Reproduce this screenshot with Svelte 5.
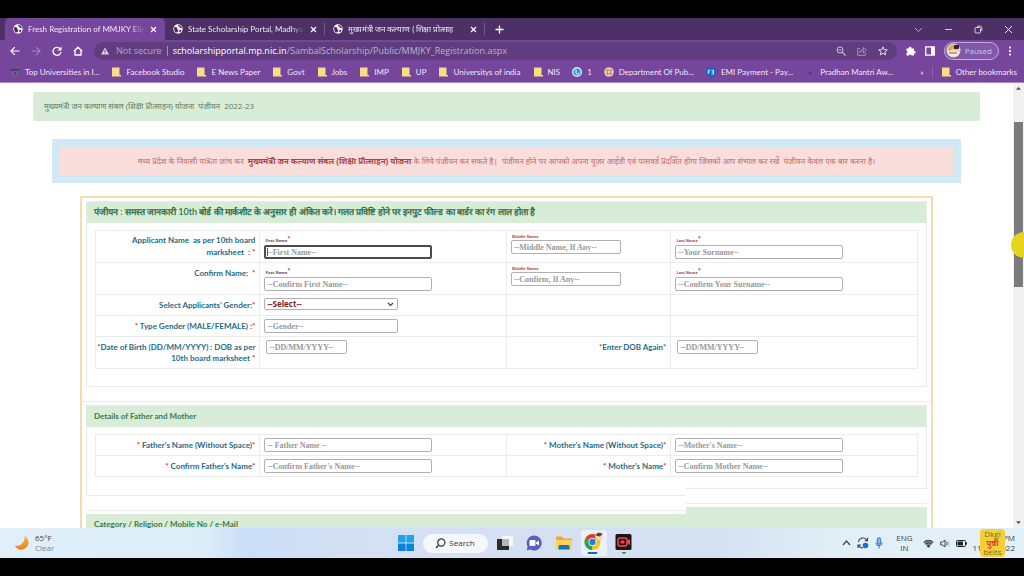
<script>
  const tabs = [
    { title: 'Fresh Registration of MMJKY Elig', active: true },
    { title: 'State Scholarship Portal, Madhya', active: false },
    { title: 'मुख्यमंत्री जन कल्याण ( शिक्षा प्रोत्साह', active: false }
  ];

  const bookmarks = [
    { icon: 'college', label: 'Top Universities in I...' },
    { icon: 'folder', label: 'Facebook Studio' },
    { icon: 'folder', label: 'E News Paper' },
    { icon: 'folder', label: 'Govt' },
    { icon: 'folder', label: 'Jobs' },
    { icon: 'folder', label: 'IMP' },
    { icon: 'folder', label: 'UP' },
    { icon: 'folder', label: 'Universitys of india' },
    { icon: 'folder', label: 'NIS' },
    { icon: 'swirl', label: '1' },
    { icon: 'seal', label: 'Department Of Pub...' },
    { icon: 'emi', label: 'EMI Payment - Pay...' },
    { icon: 'dots', label: 'Pradhan Mantri Aw...' }
  ];
</script>

{#snippet globe()}
  <svg class="globe" viewBox="0 0 16 16" aria-hidden="true">
    <circle cx="8" cy="8" r="7.5" fill="#fff" />
    <path d="M2 5c3-.5 5 .5 5 2.500s2 1.500 1.500 3.500-3 1.500-3 3C3 13 1 10 2 5zM8 1.500c3-.5 6 2 6.200 5-1.700.8-3-.2-3.400-1.500C10.400 3.800 8 4 8 1.500zM10.500 9.500c1.500-.6 3 0 3 .8-.6 1.600-2 2.700-3 3-.8-1-.9-3 0-3.800z" fill="#4d3065" />
  </svg>
{/snippet}

{#snippet folder()}
  <svg class="mark" viewBox="0 0 10 10" aria-hidden="true">
    <path d="M1 .5h7.500V8H10v1.500H1z" fill="#fddc86" />
  </svg>
{/snippet}

<div class="screen">
  <header class="browser">
    <div class="tabstrip">
      {#each tabs as tab}
        <div class="tab" class:active={tab.active}>
          {@render globe()}
          <span class="title">{tab.title}</span>
          <button class="bare" aria-label="Close tab">
            <svg width="7" height="7" viewBox="0 0 7 7"><path d="M1 1l5 5M6 1L1 6" stroke="#fff" stroke-width="1.200" /></svg>
          </button>
        </div>
      {/each}
      <button class="bare plus" aria-label="New tab">
        <svg width="9" height="9" viewBox="0 0 9 9"><path d="M4.500 .5v8M.5 4.500h8" stroke="#fff" stroke-width="1.300" /></svg>
      </button>
      <div class="window">
        <button class="bare" aria-label="Search tabs"><svg width="9" height="9" viewBox="0 0 9 9"><path d="M1 3l3.500 3.500L8 3" fill="none" stroke="#b7a6c6" /></svg></button>
        <button class="bare" aria-label="Minimize"><svg width="9" height="9" viewBox="0 0 9 9"><path d="M1 4.500h7" stroke="#d6cbe0" /></svg></button>
        <button class="bare" aria-label="Restore"><svg width="9" height="9" viewBox="0 0 9 9"><rect x="1" y="2.500" width="5.500" height="5.500" rx="1" fill="none" stroke="#d6cbe0" /><path d="M3 1.200h3.500a1.300 1.300 0 0 1 1.300 1.300V6" fill="none" stroke="#d6cbe0" /></svg></button>
        <button class="bare" aria-label="Close"><svg width="9" height="9" viewBox="0 0 9 9"><path d="M1 1l7 7M8 1L1 8" stroke="#e6dfed" /></svg></button>
      </div>
    </div>

    <div class="toolbar">
      <nav class="moves" aria-label="Navigation">
        <button class="bare" aria-label="Back"><svg width="10" height="10" viewBox="0 0 10 10"><path d="M9.500 5H1M4.800 1.200L1 5l3.800 3.800" fill="none" stroke="#fff" stroke-width="1.200" /></svg></button>
        <button class="bare" aria-label="Forward"><svg width="10" height="10" viewBox="0 0 10 10"><path d="M.5 5H9M5.200 1.200L9 5 5.200 8.800" fill="none" stroke="#a583c8" stroke-width="1.200" /></svg></button>
        <button class="bare" aria-label="Reload"><svg width="10" height="10" viewBox="0 0 10 10"><path d="M8.200 2.800A4 4 0 1 0 9 6" fill="none" stroke="#fff" stroke-width="1.300" /><path d="M9.500 .5v4h-4z" fill="#fff" /></svg></button>
        <button class="bare" aria-label="Home"><svg width="10" height="10" viewBox="0 0 10 10"><path d="M.8 5.200L5 1.200l4.200 4M2 4.500V9h6V4.500" fill="none" stroke="#fff" stroke-width="1.300" /></svg></button>
      </nav>
      <div class="address">
        <svg width="8" height="8" viewBox="0 0 8 8" aria-hidden="true"><path d="M4 .5L8 7.500H0z" fill="#d9cfe3" /><path d="M4 3v2M4 5.700v1" stroke="#5f3d7e" /></svg>
        <span class="unsafe">Not secure</span>
        <span class="bar"></span>
        <span class="url"><b>scholarshipportal.mp.nic.in</b>/SambalScholarship/Public/MMJKY_Registration.aspx</span>
        <button class="bare" aria-label="Zoom"><svg width="10" height="10" viewBox="0 0 10 10"><circle cx="4" cy="4" r="3" fill="none" stroke="#cdbfdb" /><path d="M6.200 6.200L9.500 9.500M2.500 4h3" stroke="#cdbfdb" stroke-width="1.200" /></svg></button>
        <button class="bare" aria-label="Share"><svg width="10" height="10" viewBox="0 0 10 10"><path d="M3 2.500H.7v6.800h7.600V7M2.600 6.500C3 4.500 4.500 3.500 6.500 3.500V1.300L9.500 4.300l-3 2.700V5C4.800 5 3.500 5.500 2.600 6.500z" fill="none" stroke="#ab95bf" stroke-width=".9" /></svg></button>
        <button class="bare" aria-label="Bookmark"><svg width="10" height="10" viewBox="0 0 10 10"><path d="M5 .8l1.200 2.900 3.100.2-2.400 2 .8 3L5 7.300 2.300 8.900l.8-3-2.400-2 3.100-.2z" fill="none" stroke="#e4dcec" /></svg></button>
      </div>
      <button class="bare" aria-label="Extensions"><svg width="10" height="10" viewBox="0 0 10 10"><path d="M.5 2.500h2.300a1.400 1.400 0 1 1 2.700 0H8V5a1.300 1.300 0 1 1 0 2.500v2H5.600a1.300 1.300 0 0 0-2.500 0H.5V7.200a1.300 1.300 0 0 0 0-2.500z" fill="#fff" /></svg></button>
      <button class="bare" aria-label="Side panel"><svg width="10" height="10" viewBox="0 0 10 10"><rect x=".7" y=".9" width="8.600" height="8.200" fill="none" stroke="#fff" stroke-width="1.300" /><path d="M6 1h3v8H6z" fill="#fff" /></svg></button>
      <button class="profile">
        <svg width="15" height="15" viewBox="0 0 15 15" aria-hidden="true"><circle cx="7.500" cy="7.500" r="7" fill="#e9d9c8" /><path d="M2 6c2-5 8-6 11-1l-2 2-4-1-4 2z" fill="#d9a640" /><rect x="8" y="2" width="5" height="4" rx="1" fill="#2b2733" /><path d="M1 9h12l-2 4H4z" fill="#f6eee6" /><path d="M3 10h8" stroke="#a04a3a" /></svg>
        Paused
      </button>
      <button class="bare" aria-label="Menu"><svg width="4" height="10" viewBox="0 0 4 10"><path d="M1 .5h2v2H1zM1 4h2v2H1zM1 7.500h2v2H1z" fill="#e9e1f1" /></svg></button>
    </div>

    <nav class="bookmarks" aria-label="Bookmarks">
      {#each bookmarks as b}
        <a href="#top">
          {#if b.icon === 'folder'}
            {@render folder()}
          {:else if b.icon === 'college'}
            <svg class="mark" viewBox="0 0 10 10" aria-hidden="true"><path d="M0 2h10L8.500 4h-7z" fill="#4c3b63" /><path d="M2 4h6l-1 5H3z" fill="#4e7d77" /><path d="M4 5h2v3H4z" fill="#5b3f86" /></svg>
          {:else if b.icon === 'swirl'}
            <svg class="mark" viewBox="0 0 10 10" aria-hidden="true"><circle cx="5" cy="5" r="5" fill="#d8ecf8" /><circle cx="5" cy="5" r="3.600" fill="#3f8fd0" /><path d="M4 2.500v3.200a1.500 1.500 0 0 0 3 0" fill="none" stroke="#e9f6ff" /></svg>
          {:else if b.icon === 'seal'}
            <svg class="mark" viewBox="0 0 10 10" aria-hidden="true"><circle cx="5" cy="5" r="4.800" fill="#e8c9b0" /><circle cx="5" cy="5" r="3" fill="#c2795a" /><path d="M1 5h8M5 2v6" stroke="#f2dccb" /></svg>
          {:else if b.icon === 'emi'}
            <svg class="mark" viewBox="0 0 10 10" aria-hidden="true"><circle cx="5" cy="5" r="5" fill="#0f6bc4" /><path d="M2.300 7V3.200h2M2.300 5h1.500M5.500 3.200h2V7h-2M5.800 5h1.500" fill="none" stroke="#fff" stroke-width=".8" /></svg>
          {:else}
            <svg class="mark" viewBox="0 0 10 10" aria-hidden="true"><circle cx="5" cy="2.500" r="1" fill="#8a4f6e" /><path d="M3 5l2-1 2 2-2 2z" fill="#4b3c94" /></svg>
          {/if}
          <span>{b.label}</span>
        </a>
      {/each}
      <button class="bare more" aria-label="More bookmarks">»</button>
      <a class="other" href="#top">{@render folder()}<span>Other bookmarks</span></a>
    </nav>
  </header>

  <div class="viewport">
    <main>
      <div class="notice">मुख्यमंत्री जन कल्याण संबल (शिक्षा प्रोत्साहन) योजना&nbsp; पंजीयन&nbsp; 2022-23</div>

      <div class="info">
        <p class="warn">मध्य प्रदेश के निवासी पात्रता जांच कर&nbsp; <b>मुख्यमंत्री जन कल्याण संबल (शिक्षा प्रोत्साहन) योजना</b> के लिये पंजीयन कर सकते है|&nbsp; पंजीयन होने पर आपको अपना यूजर आईडी एवं पासवर्ड प्रदर्शित होगा जिसको आप संभाल कर रखें&nbsp; पंजीयन केवल एक बार करना है।</p>
      </div>

      <form class="sheet">
        <section class="panel">
          <h2 class="hindi">पंजीयन : समस्त जानकारी 10th बोर्ड की मार्कशीट के अनुसार ही अंकित करे। गलत प्रविष्टि होने पर इनपुट फील्ड का बार्डर का रंग लाल होता है</h2>
          <div class="body">
            <table>
              <colgroup><col class="name" /><col class="value" /><col class="name" /><col class="value" /></colgroup>
              <tbody>
                <tr class="tall">
                  <td class="ask loose">Applicant Name&nbsp; as per 10th board<br />marksheet&nbsp; : <i>*</i></td>
                  <td><label class="tiny dark" for="first">First Name<i>*</i></label><input id="first" class="wide focused" placeholder="--First Name--" /></td>
                  <td><label class="tiny plain" for="middle">Middle Name</label><input id="middle" class="short" placeholder="--Middle Name, If Any--" /></td>
                  <td><label class="tiny" for="last">Last Name<i>*</i></label><input id="last" class="wide" placeholder="--Your Surname--" /></td>
                </tr>
                <tr class="tall">
                  <td class="ask">Confirm Name: &nbsp;<i>*</i></td>
                  <td><label class="tiny dark" for="first2">First Name<i>*</i></label><input id="first2" class="wide" placeholder="--Confirm First Name--" /></td>
                  <td><label class="tiny plain" for="middle2">Middle Name</label><input id="middle2" class="short" placeholder="--Confirm, If Any--" /></td>
                  <td><label class="tiny" for="last2">Last Name<i>*</i></label><input id="last2" class="wide" placeholder="--Confirm Your Surname--" /></td>
                </tr>
                <tr class="low">
                  <td class="ask"><label for="gender">Select Applicants’ Gender:<i>*</i></label></td>
                  <td><select id="gender" class="mid"><option>--Select--</option></select></td>
                  <td></td>
                  <td></td>
                </tr>
                <tr class="low">
                  <td class="ask"><label for="gender2"><i>*</i> Type Gender (MALE/FEMALE) :<i>*</i></label></td>
                  <td><input id="gender2" class="mid" placeholder="--Gender--" /></td>
                  <td></td>
                  <td></td>
                </tr>
                <tr class="tall">
                  <td class="ask"><label for="dob"><i>*</i>Date of Birth (DD/MM/YYYY) : DOB as per<br />10th board marksheet <i>*</i></label></td>
                  <td class="date"><input id="dob" placeholder="--DD/MM/YYYY--" /></td>
                  <td class="ask"><label for="dob2"><i>*</i>Enter DOB Again<i>*</i></label></td>
                  <td class="date"><input id="dob2" placeholder="--DD/MM/YYYY--" /></td>
                </tr>
              </tbody>
            </table>
          </div>
        </section>

        <section class="panel open">
          <h2>Details of Father and Mother</h2>
          <div class="body">
            <table>
              <colgroup><col class="name" /><col class="value" /><col class="name" /><col class="value" /></colgroup>
              <tbody>
                <tr class="low">
                  <td class="ask"><label for="father"><i>*</i> Father's Name (Without Space)<i>*</i></label></td>
                  <td><input id="father" class="wide" placeholder="-- Father Name --" /></td>
                  <td class="ask"><label for="mother"><i>*</i> Mother's Name (Without Space)<i>*</i></label></td>
                  <td><input id="mother" class="wide" placeholder="--Mother's Name--" /></td>
                </tr>
                <tr class="low">
                  <td class="ask"><label for="father2"><i>*</i> Confirm Father's Name<i>*</i></label></td>
                  <td><input id="father2" class="wide" placeholder="--Confirm Father's Name--" /></td>
                  <td class="ask"><label for="mother2"><i>*</i> Mother's Name<i>*</i></label></td>
                  <td><input id="mother2" class="wide" placeholder="--Confirm Mother Name--" /></td>
                </tr>
              </tbody>
            </table>
          </div>
        </section>

        <div class="split">
          <div class="lower">
            <div class="foot"></div>
            <h2>Category / Religion / Mobile No / e-Mail</h2>
          </div>
          <div class="upper">
            <div class="foot"></div>
            <div class="band"></div>
          </div>
        </div>
      </form>
    </main>

    <div class="scroll" aria-hidden="true">
      <svg viewBox="0 0 7 5"><path d="M0 5l3.500-4L7 5z" fill="#505050" /></svg>
      <span class="gap"></span>
      <span class="thumb"></span>
      <span class="rest"></span>
      <svg viewBox="0 0 7 5"><path d="M0 0l3.500 4L7 0z" fill="#505050" /></svg>
    </div>
    <span class="pointer"></span>
  </div>

  <footer class="taskbar">
    <div class="weather">
      <svg width="16" height="16" viewBox="0 0 16 16" aria-hidden="true"><defs><linearGradient id="moon" x1="0" y1="0" x2="0" y2="1"><stop offset="0" stop-color="#fbb13c" /><stop offset="1" stop-color="#f0821e" /></linearGradient></defs><path d="M10.500 1A7.200 7.200 0 1 1 .8 10.500C6 12 11.500 7 10.500 1z" fill="url(#moon)" /></svg>
      <div><div class="deg">65°F</div><div class="sky">Clear</div></div>
    </div>

    <div class="apps">
      <button class="bare" aria-label="Start"><svg width="16" height="16" viewBox="0 0 16 16"><path d="M0 0h7.600v7.600H0zM8.400 0H16v7.600H8.400z" fill="#1ba4ea" /><path d="M0 8.400h7.600V16H0zM8.400 8.400H16V16H8.400z" fill="#0a84d6" /></svg></button>
      <button class="search"><svg width="11" height="11" viewBox="0 0 11 11" aria-hidden="true"><circle cx="6.300" cy="4.500" r="3.600" fill="none" stroke="#333" stroke-width="1.200" /><path d="M3.700 7L1 10" stroke="#333" stroke-width="1.300" /></svg>Search</button>
      <button class="bare" aria-label="Task view"><svg width="16" height="16" viewBox="0 0 16 16"><rect x="5" y="1" width="11" height="10" fill="#f6f6f6" /><rect x="0" y="4" width="12" height="11" fill="#2b2b2b" /><rect x="5" y="4" width="7" height="7" fill="#b5b5b5" /></svg></button>
      <button class="bare" aria-label="Chat"><svg width="16" height="16" viewBox="0 0 16 16"><path d="M8 .5a7.500 7.500 0 1 1-3.500 14L.8 15.500l.7-4A7.500 7.500 0 0 1 8 .5z" fill="#5a5fc0" /><rect x="3.500" y="5" width="6" height="6" rx="1.300" fill="#fff" /><path d="M10 7.500l3-2v5l-3-2z" fill="#fff" /></svg></button>
      <button class="bare" aria-label="Files"><svg width="18" height="16" viewBox="0 0 18 16"><path d="M1 2.500A1 1 0 0 1 2 1.500h4.500l2 2H16a1 1 0 0 1 1 1V14H1z" fill="#f0a72c" /><path d="M1 5h16v8.500a1 1 0 0 1-1 1H2a1 1 0 0 1-1-1z" fill="#fdd05a" /><path d="M3.500 14.500v-3a1.500 1.500 0 0 1 1.500-1.500h8a1.500 1.500 0 0 1 1.500 1.500v3z" fill="#1473b4" /></svg></button>
      <button class="bare chrome" aria-label="Chrome">
        <svg width="22" height="24" viewBox="0 0 22 24"><circle cx="9.500" cy="11" r="8" fill="#f9c31f" /><path d="M9.500 11L2.600 7A8 8 0 0 1 16.500 7z" fill="#e33b2e" /><path d="M9.500 11L9 19A8 8 0 0 1 2.600 7z" fill="#2da14c" /><circle cx="9.500" cy="11" r="4" fill="#fff" /><circle cx="9.500" cy="11" r="3.200" fill="#2c78e6" /><circle cx="16" cy="5" r="4" fill="#ead9c8" /><path d="M12.500 4.500c1-3 5-4 7-1l-3 2z" fill="#5d4238" /><rect x="4.500" y="21" width="10" height="2" rx="1" fill="#1667b0" /></svg>
      </button>
      <button class="bare" aria-label="Recorder"><svg width="17" height="22" viewBox="0 0 17 22"><rect x=".5" y="2" width="16" height="16" rx="1.500" fill="#1f1517" /><rect x="3" y="6" width="9" height="8" rx="2" fill="none" stroke="#ef4a50" stroke-width="1.500" /><rect x="5.500" y="8.500" width="4" height="3" rx="1" fill="#ef4a50" /><path d="M12 9l3-2v6l-3-2z" fill="#ef4a50" /><rect x="7" y="20" width="4" height="1.500" rx=".7" fill="#666" /></svg></button>
    </div>

    <div class="tray">
      <svg width="9" height="6" viewBox="0 0 9 6"><path d="M1 5l3.500-4L8 5" fill="none" stroke="#444" stroke-width="1.200" /></svg>
      <svg width="12" height="12" viewBox="0 0 12 12"><path d="M1.500 5A4.500 4.500 0 0 1 10 3.500M10.500 .8v3H7.800M1 11V8h3M1.500 8.500A4.500 4.500 0 0 0 6 10.800" fill="none" stroke="#37414b" stroke-width="1.100" /><circle cx="8.500" cy="8.500" r="2.800" fill="#0c78d4" /></svg>
      <svg class="mic" width="8" height="12" viewBox="0 0 8 12"><rect x="2.300" y=".8" width="3.400" height="6.500" rx="1.700" fill="#8dbbe3" stroke="#2f74b5" /><path d="M.8 5.500a3.200 3.200 0 0 0 6.400 0M4 9v2.500" fill="none" stroke="#2f74b5" /></svg>
      <div class="lang"><div>ENG</div><div>IN</div></div>
      <svg width="11" height="9" viewBox="0 0 11 9"><path d="M.5 3.200a7.200 7.200 0 0 1 10 0L5.500 8.500z" fill="#7c858c" /><path d="M.7 3.200a7 7 0 0 1 9.600 0M2.300 5a4.700 4.700 0 0 1 6.400 0" fill="none" stroke="#343c43" /><circle cx="5.500" cy="7.300" r="1.200" fill="#343c43" /></svg>
      <svg width="10" height="9" viewBox="0 0 10 9"><path d="M.7 3h1.800L5 1v7L2.500 6H.7z" fill="none" stroke="#3d454c" /><path d="M6.500 2.800a2.500 2.500 0 0 1 0 3.400" fill="none" stroke="#3d454c" /><path d="M8 1.500a4.500 4.500 0 0 1 0 6" fill="none" stroke="#b4bfc7" /></svg>
      <svg width="11" height="7" viewBox="0 0 11 7"><rect x=".5" y=".5" width="9" height="6" rx="1" fill="none" stroke="#222" /><path d="M1.500 1.500H7v4H1.500z" fill="#222" /><path d="M10 2.500h1v2h-1z" fill="#222" /></svg>
      <div class="clock">
        <div>10:01 PM</div>
        <div>11/12/2022</div>
        <div class="badge"><span>Dkgl</span><b>पुन्नी</b><span>belts</span></div>
      </div>
    </div>
  </footer>
</div>

<style>
  :global(body) {
    margin: 0;
    background: #000;
  }
  .screen {
    box-sizing: border-box;
    height: 100vh;
    padding: 18px 0;
    display: flex;
    flex-direction: column;
    overflow: hidden;
    background: #000;
    font-family: 'Open Sans', 'Noto Sans', sans-serif;
    font-size: 8px;
    line-height: 12px;
  }
  .bare {
    display: flex;
    align-items: center;
    justify-content: center;
    padding: 0;
    border: 0;
    background: none;
    color: inherit;
    font: inherit;
  }
  svg { flex: none; }

  .browser { background: #75469c; color: #efe8f6; }
  .tabstrip {
    display: flex;
    align-items: stretch;
    height: 22px;
    padding-left: 5px;
    background: #4d3065;
    font-family: Lato, sans-serif;
  }
  .tab {
    box-sizing: border-box;
    display: flex;
    align-items: center;
    gap: 5px;
    width: 160px;
    padding: 0 8px;
    background: linear-gradient(#73578a, #73578a) right center / 1px 12px no-repeat;
  }
  .tab.active {
    border-radius: 5px 5px 0 0;
    background: #75469c;
  }
  .globe { width: 10px; height: 10px; }
  .title {
    flex: 1;
    min-width: 0;
    overflow: hidden;
    white-space: nowrap;
    mask-image: linear-gradient(90deg, #000 88%, transparent);
  }
  .plus { width: 28px; }
  .window {
    display: flex;
    gap: 21px;
    margin-left: auto;
    padding-right: 11px;
  }
  .toolbar {
    display: flex;
    align-items: center;
    gap: 9px;
    height: 21px;
    padding: 0 12px 0 10px;
  }
  .moves { display: flex; gap: 11px; margin-right: 2px; }
  .address {
    flex: 1;
    display: flex;
    align-items: center;
    gap: 11px;
    height: 18px;
    padding: 0 9px 0 7px;
    border-radius: 9px;
    background: #5f3d7e;
    font-size: 9px;
  }
  .unsafe { color: #b7a5c8; margin-left: -4px; }
  .bar { width: 1px; height: 10px; margin: 0 -6px; background: #a48fb8; }
  .url { flex: 1; color: #bfaed0; white-space: nowrap; }
  .url b { color: #fff; font-weight: 400; }
  .profile {
    display: flex;
    align-items: center;
    gap: 4px;
    height: 18px;
    padding: 0 6px 0 1px;
    border: 1px solid #c5abe0;
    border-radius: 9px;
    background: #8059a8;
    color: #cfc6f5;
    font: inherit;
  }
  .bookmarks {
    display: flex;
    align-items: center;
    gap: 12px;
    height: 21px;
    padding: 0 7px 0 10px;
    border-bottom: 1px solid #a98bc4;
    font-family: Lato, sans-serif;
  }
  .bookmarks a {
    display: flex;
    align-items: center;
    gap: 5px;
    color: #efe8f6;
    text-decoration: none;
    white-space: nowrap;
  }
  .mark { width: 10px; height: 10px; }
  .more { margin-left: auto; }
  .bookmarks .other { padding-left: 8px; margin-left: -4px; border-left: 1px solid #8c63b0; }

  .viewport {
    position: relative;
    flex: 1;
    min-height: 0;
    display: flex;
    overflow: hidden;
    background: #fff;
  }
  main {
    flex: 1;
    min-width: 0;
    padding: 9px 33px 0;
  }
  .notice {
    padding: 8px 11px 9px;
    border-radius: 2px;
    background: #d8ecd7;
    color: #5a8163;
  }
  .info {
    margin: 18px 19px 0;
    padding: 8px;
    background: #d0e9f5;
  }
  .warn {
    margin: 0;
    padding: 8px 0;
    background: #fadedc;
    color: #c0696b;
    text-align: center;
    white-space: nowrap;
  }
  .warn b { color: #a94448; }
  .sheet {
    margin: 13px 47px 0;
    padding: 3px 0 40px;
    border: 2px solid #f4dcb0;
  }
  .panel {
    margin: 0 4px;
    border: 1px solid #e3efe1;
  }
  h2, .band {
    box-sizing: border-box;
    height: 21px;
    margin: 0;
    padding: 4px 7px;
    background: #d8ecd7;
    color: #3b7a50;
    font: 700 8px/12px Lato, 'Open Sans', sans-serif;
    white-space: nowrap;
  }
  h2.hindi {
    color: #2f6e49;
    font-size: 9px;
    font-weight: 600;
  }
  .body { padding: 7px 8px 17px; }
  table {
    width: 100%;
    border-collapse: collapse;
    table-layout: fixed;
  }
  .name { width: 20%; }
  .value { width: 30%; }
  td {
    box-sizing: border-box;
    padding: 3px 4px;
    border: 1px solid #ececec;
    vertical-align: top;
  }
  .tall { height: 32px; }
  .low { height: 21px; }
  td.ask {
    padding: 5px 4px 0 0;
    color: #276a86;
    font-family: Lato, 'Open Sans', sans-serif;
    font-weight: 700;
    text-align: right;
    line-height: 11px;
  }
  td.loose { padding-top: 3px; line-height: 12px; }
  i { color: #e8322b; font-style: normal; }
  .tiny {
    display: block;
    height: 11px;
    padding-left: 1px;
    color: #b04a50;
    font-size: 4px;
    font-weight: 700;
    line-height: 14px;
  }
  .tiny.dark { color: #7c3d44; }
  .tiny.plain { height: 6px; line-height: 6px; }
  .tiny i { font: 700 8px/8px Lato, sans-serif; }
  input, select {
    box-sizing: border-box;
    display: block;
    height: 14px;
    margin: 0;
    padding: 0 2px;
    border: 1px solid #b0b0b0;
    border-radius: 2px;
    background: #fff;
    color: #8b1a22;
    font: 700 8px/12px 'Liberation Serif', serif;
  }
  input::placeholder { color: #999; opacity: 1; }
  .wide { width: 168px; }
  .mid { width: 134px; }
  .short { width: 110px; }
  .date { padding-left: 6px; }
  .date input { width: 81px; }
  .focused {
    border: 2px solid #4a4a4e;
    padding: 0 1px;
    background: linear-gradient(#a33, #a33) 1px 50% / 1px 8px no-repeat #fff;
  }
  select {
    height: 12px;
    font: 700 8px/10px 'Open Sans', sans-serif;
    appearance: none;
    background: #fff url("data:image/svg+xml,%3Csvg xmlns='http://www.w3.org/2000/svg' viewBox='0 0 7 5'%3E%3Cpath d='M1 1l2.500 2.500L6 1' fill='none' stroke='%237a2a34' stroke-width='1.200'/%3E%3C/svg%3E") right 3px center / 7px 5px no-repeat;
  }
  .open {
    margin-top: 18px;
    border-bottom: 0;
    position: relative;
  }
  .open::before {
    content: '';
    position: absolute;
    inset: -5px -5px auto;
    border-top: 1px solid #ececec;
  }
  .open .body { padding-bottom: 0; }
  .split { display: grid; grid-template-columns: 603fr 245fr; }
  .foot { border-bottom: 1px solid #e3efe1; }
  .lower .foot { height: 18px; margin-left: 4px; border-left: 1px solid #e3efe1; }
  .upper .foot { height: 11px; margin-right: 4px; border-right: 1px solid #e3efe1; }
  .split h2, .band {
    height: 25px;
    position: relative;
    margin-top: 18px;
  }
  .lower h2 { margin-left: 4px; padding-left: 8px; }
  .upper .band { margin-right: 4px; height: 32px; }
  .split h2::before, .band::before {
    content: '';
    position: absolute;
    inset: -4px 0 auto;
    border-top: 1px solid #ececec;
  }

  .scroll {
    display: flex;
    flex-direction: column;
    align-items: center;
    width: 11px;
    padding: 3px 0;
    box-sizing: border-box;
    background: #f1f1f1;
  }
  .scroll svg { width: 5px; height: 4px; }
  .gap { flex: 32; }
  .thumb { flex: 165; width: 9px; background: #7b7b7b; }
  .rest { flex: 234; }
  .pointer {
    position: absolute;
    top: 149px;
    right: -13px;
    width: 26px;
    height: 26px;
    border-radius: 50%;
    background: #e6d51f;
  }

  .taskbar {
    position: relative;
    display: grid;
    grid-template-columns: 1fr auto 1fr;
    align-items: center;
    height: 30px;
    padding: 0 9px 0 14px;
    background: linear-gradient(90deg, #e0eff9 0, #dcedf9 20%, #c9def8 24%, #d3dff2 33%, #d5e1f3 70%, #e2eff7 82%, #e2f0f8);
    color: #3f474d;
  }
  .weather { display: flex; align-items: center; gap: 5px; line-height: 10px; }
  .sky { color: #78858d; }
  .apps { display: flex; align-items: center; gap: 13px; }
  .search {
    display: flex;
    align-items: center;
    justify-content: center;
    gap: 3px;
    width: 65px;
    height: 19px;
    margin: 0 -4px;
    padding: 0;
    border: 0;
    border-radius: 10px;
    background: #f4f8fd;
    color: #333;
    font: inherit;
  }
  .chrome { width: 26px; height: 26px; margin: 0 -5px; background: #eaf1fa; border-radius: 3px; }
  .tray { display: flex; align-items: center; justify-content: flex-end; gap: 6px; }
  .lang { margin: 0 4px 0 7px; text-align: center; line-height: 10px; }
  .clock { position: relative; text-align: right; line-height: 10px; }
  .badge {
    position: absolute;
    top: -4px;
    right: 10px;
    display: flex;
    flex-direction: column;
    align-items: center;
    width: 25px;
    height: 28px;
    border-radius: 4px;
    background: #f4cf3a;
    color: #7a6a2a;
    line-height: 9px;
  }
  .badge b { color: #e2402a; }
</style>
